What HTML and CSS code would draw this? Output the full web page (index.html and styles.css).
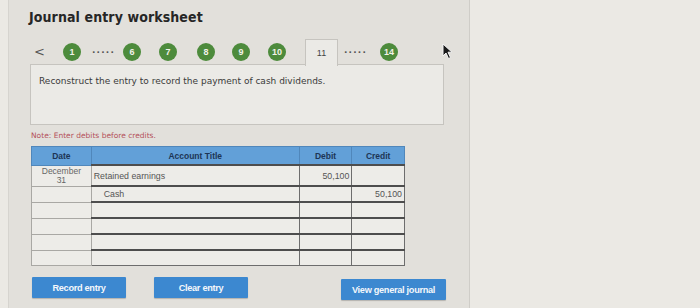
FILE: index.html
```html
<!DOCTYPE html>
<html lang="en">
<head>
    <meta charset="UTF-8">
    <meta name="viewport" content="width=device-width, initial-scale=1.0">
    <title>Journal entry worksheet</title>
    <link rel="stylesheet" href="styles.css">
</head>
<body>
    <div class="worksheet">
        <h1>Journal entry worksheet</h1>

        <div class="steps">
            <span class="prev">&lt;</span>
            <span class="step first">1</span>
            <span class="dots">.....</span>
            <span class="step after-dots">6</span>
            <span class="step">7</span>
            <span class="step s8">8</span>
            <span class="step s9">9</span>
            <span class="step">10</span>
            <span class="tab">11</span>
            <span class="dots short">.....</span>
            <span class="step s14">14</span>
            <svg class="cursor" width="12" height="18" viewBox="0 0 12 18">
                <path d="M1 1 L1 13 L4 10 L6.5 15.5 L8.5 14.6 L6 9.2 L10 9.2 Z" fill="#1a1a1a" stroke="#f4f4f4" stroke-width="1"/>
            </svg>
        </div>

        <div class="prompt">
            Reconstruct the entry to record the payment of cash dividends.
        </div>

        <p class="note">Note: Enter debits before credits.</p>

        <table class="journal">
            <thead>
                <tr>
                    <th class="c-date">Date</th>
                    <th class="c-title">Account Title</th>
                    <th class="c-amt">Debit</th>
                    <th class="c-amt">Credit</th>
                </tr>
            </thead>
            <tbody>
                <tr class="tall">
                    <td class="date">December<br>31</td>
                    <td class="field">Retained earnings</td>
                    <td class="field num">50,100</td>
                    <td class="field num"></td>
                </tr>
                <tr>
                    <td class="date"></td>
                    <td class="field indent">Cash</td>
                    <td class="field num"></td>
                    <td class="field num">50,100</td>
                </tr>
                <tr><td class="date"></td><td class="field"></td><td class="field"></td><td class="field"></td></tr>
                <tr><td class="date"></td><td class="field"></td><td class="field"></td><td class="field"></td></tr>
                <tr><td class="date"></td><td class="field"></td><td class="field"></td><td class="field"></td></tr>
                <tr><td class="date"></td><td class="field"></td><td class="field"></td><td class="field"></td></tr>
            </tbody>
        </table>

        <div class="actions">
            <button class="btn">Record entry</button>
            <button class="btn clear">Clear entry</button>
            <button class="btn view">View general journal</button>
        </div>
    </div>
</body>
</html>
```

FILE: styles.css
```css
body {
    margin: 0;
    background-color: #ebe9e4;
    font-family: "DejaVu Sans", Verdana, sans-serif;
    height: 308px;
    overflow: hidden;
}

.worksheet {
    width: 439px;
    height: 308px;
    margin-left: 8px;
    padding-left: 21px;
    background-color: #e2e0db;
    border-left: 1px solid #d6d4cf;
    border-right: 1px solid #cfcdc8;
}

h1 {
    margin: 0;
    padding-top: 9px;
    margin-left: -1px;
    font-family: "DejaVu Sans Condensed", "DejaVu Sans", sans-serif;
    font-size: 14px;
    font-weight: bold;
    color: #262626;
    letter-spacing: 0.1px;
    height: 29px;
}

.steps {
    display: flex;
    align-items: center;
    height: 26px;
    position: relative;
}

.prev {
    margin-left: 4px;
    width: 6px;
    font-size: 13px;
    color: #555;
    font-family: "DejaVu Sans", sans-serif;
}

.step {
    width: 18px;
    height: 18px;
    border-radius: 50%;
    background-color: #4d8b3c;
    color: #f2f2ea;
    font-family: "Liberation Sans", Arial, sans-serif;
    font-size: 9px;
    font-weight: bold;
    display: flex;
    justify-content: center;
    align-items: center;
    margin-left: 18px;
    margin-top: 2px;
}

.step.first { margin-left: 23px; }
.step.after-dots { margin-left: 9px; }
.step.s8 { margin-left: 20px; }
.step.s9 { margin-left: 17px; }
.step.s14 { margin-left: 14px; }

.dots {
    margin-left: 11px;
    width: 22px;
    color: #555;
    font-size: 9px;
    font-weight: bold;
    letter-spacing: 1.2px;
    margin-top: -2px;
}

.dots.short { margin-left: 6px; }

.tab {
    margin-left: 19px;
    width: 33px;
    margin-top: 1px;
    align-self: flex-start;
    background-color: #ebeae6;
    border: 1px solid #c6c4bf;
    border-bottom: none;
    font-family: "Liberation Sans", Arial, sans-serif;
    font-size: 9px;
    color: #444;
    display: flex;
    justify-content: center;
    padding-top: 8px;
    box-sizing: border-box;
    height: 27px;
    position: relative;
    z-index: 1;
}

.cursor {
    position: absolute;
    left: 412px;
    top: 5px;
}

.prompt {
    width: 414px;
    height: 61px;
    box-sizing: border-box;
    background-color: #ebeae6;
    border: 1px solid #c6c4bf;
    padding: 11px 8px;
    font-family: "DejaVu Sans", Verdana, sans-serif;
    font-size: 9px;
    color: #3a3a3a;
}

.note {
    margin: 6px 0 0 1px;
    font-family: "DejaVu Sans", Verdana, sans-serif;
    font-size: 7.5px;
    color: #b4505a;
    height: 15px;
}

.journal {
    border-collapse: collapse;
    width: 374px;
    margin-left: 1px;
    font-family: "Liberation Sans", Arial, sans-serif;
    font-size: 8.8px;
    color: #555;
}

.journal th {
    background-color: #62a0d8;
    color: #1d3555;
    font-weight: bold;
    font-size: 8.5px;
    height: 17px;
    padding: 0;
    border: 1px solid #5087bb;
}

.c-date { width: 59px; }
.c-title { width: 210px; }
.c-amt { width: 52px; }

.journal td {
    height: 14px;
    padding: 0 2px;
    background-color: #edece8;
}

.journal tr.tall td { height: 19px; }

.journal td.date {
    text-align: center;
    line-height: 9px;
    border: 1px solid #a9a8a4;
    color: #666;
    font-size: 8.5px;
}

.journal td.field {
    border: 1px solid #6d6d6d;
    border-top: 2px solid #4d4d4d;
    border-left: 1.5px solid #3f3f3f;
}

.journal td.num { text-align: right; }
.journal td.indent { padding-left: 12px; }

.actions {
    display: flex;
    align-items: flex-start;
    margin-top: 11px;
}

.btn {
    height: 21px;
    border: none;
    border-radius: 1px;
    background-color: #3c88d0;
    color: #f4f7fb;
    font-family: "Liberation Sans", Arial, sans-serif;
    font-size: 9.2px;
    font-weight: bold;
    letter-spacing: -0.3px;
    padding: 0;
    width: 94px;
    margin-left: 2px;
    box-shadow: 0 1px 1px rgba(0, 0, 0, 0.2);
}

.btn.clear { margin-left: 28px; }

.btn.view {
    width: 105px;
    margin-left: 93px;
    margin-top: 2px;
}
```
